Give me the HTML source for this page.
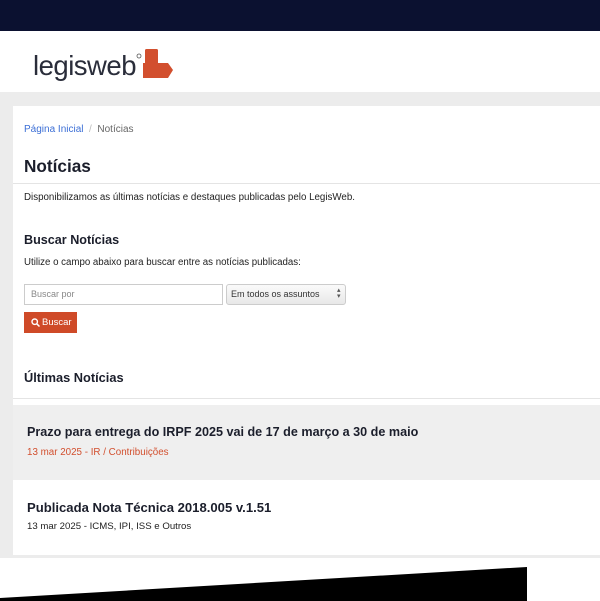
<!DOCTYPE html>
<html><head><meta charset="utf-8"><style>
*{margin:0;padding:0;box-sizing:border-box}
body{width:600px;height:601px;overflow:hidden;background:#fff;font-family:"Liberation Sans",sans-serif;position:relative;color:#1a1a1a}
.top{position:absolute;left:0;top:0;width:600px;height:31px;background:#0b1130}
.hdr{position:absolute;left:0;top:31px;width:600px;height:61px;background:#fff}
.logo{position:absolute;left:33px;top:52px;font-size:27.5px;color:#2a2d3a;letter-spacing:-0.5px;line-height:28px}
.gray{position:absolute;left:0;top:92px;width:600px;height:466px;background:#ececec}
.card{position:absolute;left:13px;top:106px;width:587px;height:449px;background:#fff}
.t{position:absolute;white-space:nowrap}
</style></head><body>
<div class="top"></div>
<div class="hdr"></div>
<div class="logo">legisweb</div>
<svg style="position:absolute;left:134px;top:46px" width="40" height="36">
<circle cx="5" cy="10" r="2" fill="none" stroke="#555" stroke-width="0.8"/>
<rect x="11" y="3" width="13" height="15" rx="1.5" fill="#d24f2e"/>
<path d="M9 17 H34 L39 24 L34 32 H9 Z" fill="#d24f2e"/>
</svg>
<div class="gray"></div>
<div class="card"></div>
<div class="t" style="left:24px;top:124px;font-size:10px;color:#3c6fd6">Página Inicial <span style="color:#bbb">&nbsp;/&nbsp;</span> <span style="color:#666">Notícias</span></div>
<div class="t" style="left:24px;top:156px;font-size:17.2px;font-weight:bold;color:#1b1e2b">Notícias</div>
<div style="position:absolute;left:13px;top:183px;width:587px;height:1px;background:#e4e4e4"></div>
<div class="t" style="left:24px;top:192px;font-size:9.75px;color:#222">Disponibilizamos as últimas notícias e destaques publicadas pelo LegisWeb.</div>
<div class="t" style="left:24px;top:233px;font-size:12.6px;font-weight:bold;color:#1b1e2b">Buscar Notícias</div>
<div class="t" style="left:24px;top:257px;font-size:9.7px;color:#222">Utilize o campo abaixo para buscar entre as notícias publicadas:</div>
<div style="position:absolute;left:24px;top:284px;width:199px;height:21px;border:1px solid #ccc;background:#fff"></div>
<div class="t" style="left:31px;top:289px;font-size:9px;color:#888">Buscar por</div>
<div style="position:absolute;left:226px;top:284px;width:120px;height:21px;border:1px solid #ccc;border-radius:3px;background:linear-gradient(#fafafa,#e8e8e8)"></div>
<div class="t" style="left:231px;top:289px;font-size:9px;color:#333">Em todos os assuntos</div>
<div class="t" style="left:337px;top:288px;font-size:7px;color:#555;line-height:6px">▴<br>▾</div>
<div style="position:absolute;left:24px;top:312px;width:53px;height:21px;background:#cf4a28"></div>
<svg style="position:absolute;left:31px;top:318px" width="9" height="9"><circle cx="3.7" cy="3.7" r="2.7" fill="none" stroke="#fff" stroke-width="1.4"/><path d="M5.8 5.8 L8.5 8.5" stroke="#fff" stroke-width="1.5"/></svg>
<div class="t" style="left:42px;top:317px;font-size:9.5px;color:#fff">Buscar</div>
<div class="t" style="left:24px;top:370px;font-size:12.8px;font-weight:bold;color:#1b1e2b">Últimas Notícias</div>
<div style="position:absolute;left:13px;top:398px;width:587px;height:1px;background:#e4e4e4"></div>
<div style="position:absolute;left:13px;top:405px;width:587px;height:75px;background:#efefef"></div>
<div class="t" style="left:27px;top:425px;font-size:12.6px;font-weight:bold;color:#1b1e2b">Prazo para entrega do IRPF 2025 vai de 17 de março a 30 de maio</div>
<div class="t" style="left:27px;top:447px;font-size:9.8px;color:#d24f2e">13 mar 2025 - IR / Contribuições</div>
<div class="t" style="left:27px;top:500px;font-size:13.1px;font-weight:bold;color:#1b1e2b">Publicada Nota Técnica 2018.005 v.1.51</div>
<div class="t" style="left:27px;top:521px;font-size:9.65px;color:#222">13 mar 2025 - ICMS, IPI, ISS e Outros</div>
<div style="position:absolute;left:0;top:558px;width:600px;height:43px;background:#fff"></div>
<svg style="position:absolute;left:0;top:560px" width="600" height="41"><polygon points="0,38 527,7 527,41 0,41" fill="#000"/></svg>
</body></html>
